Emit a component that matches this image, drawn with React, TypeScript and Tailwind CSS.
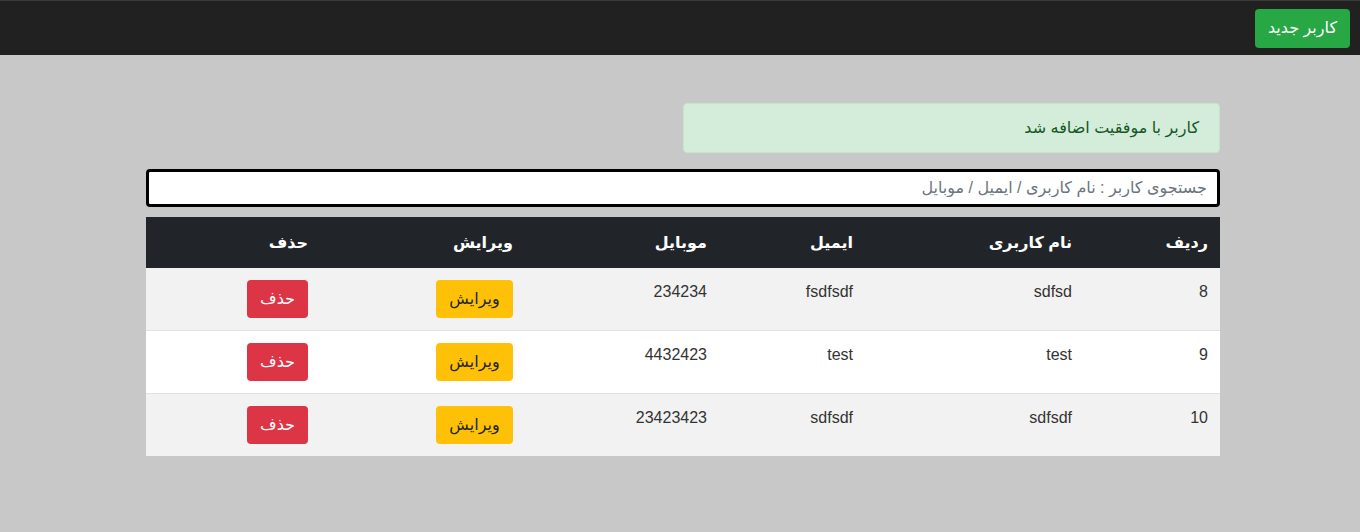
import React from "react";

type User = { id: number; username: string; email: string; mobile: string };

const users: User[] = [
  { id: 8, username: "sdfsd", email: "fsdfsdf", mobile: "234234" },
  { id: 9, username: "test", email: "test", mobile: "4432423" },
  { id: 10, username: "sdfsdf", email: "sdfsdf", mobile: "23423423" },
];

const font = "font-['Liberation_Sans','DejaVu_Sans',sans-serif]";

const App = () => {
  return (
    <div dir="rtl" className={`min-h-[532px] bg-[#c8c8c8] text-[#212529] ${font}`}>
      <nav className="h-[55px] bg-[#212121] border-t border-[#3a3a3a] flex items-center px-[10px]">
        <button className="h-[39px] w-[95px] rounded bg-[#28a745] text-white text-base">
          کاربر جدید
        </button>
      </nav>

      <div className="pl-[146px] pr-[140px] pt-[48px]">
        <div className="w-1/2">
          <div className="h-[50px] border border-[#c3e6cb] bg-[#d4edda] text-[#155724] rounded px-5 flex items-center text-base">
            کاربر با موفقیت اضافه شد
          </div>
        </div>

        <input
          className="mt-4 w-full h-[38px] border-[3px] border-black rounded bg-white px-[10px] text-base outline-none placeholder:text-[#6c757d]"
          placeholder="جستجوی کاربر : نام کاربری / ایمیل / موبایل"
        />

        <table className="mt-[10px] w-full border-collapse text-base">
          <thead>
            <tr className="bg-[#212529] text-white h-[51px]">
              <th className="w-[136px] px-3 text-right font-bold">ردیف</th>
              <th className="w-[219px] px-3 text-right font-bold">نام کاربری</th>
              <th className="w-[146px] px-3 text-right font-bold">ایمیل</th>
              <th className="w-[194px] px-3 text-right font-bold">موبایل</th>
              <th className="w-[205px] px-3 text-right font-bold">ویرایش</th>
              <th className="px-3 text-right font-bold">حذف</th>
            </tr>
          </thead>
          <tbody>
            {users.map((u, i) => (
              <tr
                key={u.id}
                className={`${i % 2 === 0 ? "bg-[#f2f2f2]" : "bg-white"} ${i > 0 ? "border-t border-[#dee2e6]" : ""}`}
              >
                <td className="px-3 py-3 align-top leading-6 text-[#333]">{u.id}</td>
                <td className="px-3 py-3 align-top leading-6 text-[#333]">{u.username}</td>
                <td className="px-3 py-3 align-top leading-6 text-[#333]">{u.email}</td>
                <td className="px-3 py-3 align-top leading-6 text-[#333]">{u.mobile}</td>
                <td className="px-3 py-3 align-top">
                  <button className="h-[38px] w-[77px] rounded bg-[#ffc107] text-[#212529] text-base">
                    ویرایش
                  </button>
                </td>
                <td className="px-3 py-3 align-top">
                  <button className="h-[38px] w-[61px] rounded bg-[#dc3545] text-white text-base">
                    حذف
                  </button>
                </td>
              </tr>
            ))}
          </tbody>
        </table>
      </div>
    </div>
  );
};

export default App;
